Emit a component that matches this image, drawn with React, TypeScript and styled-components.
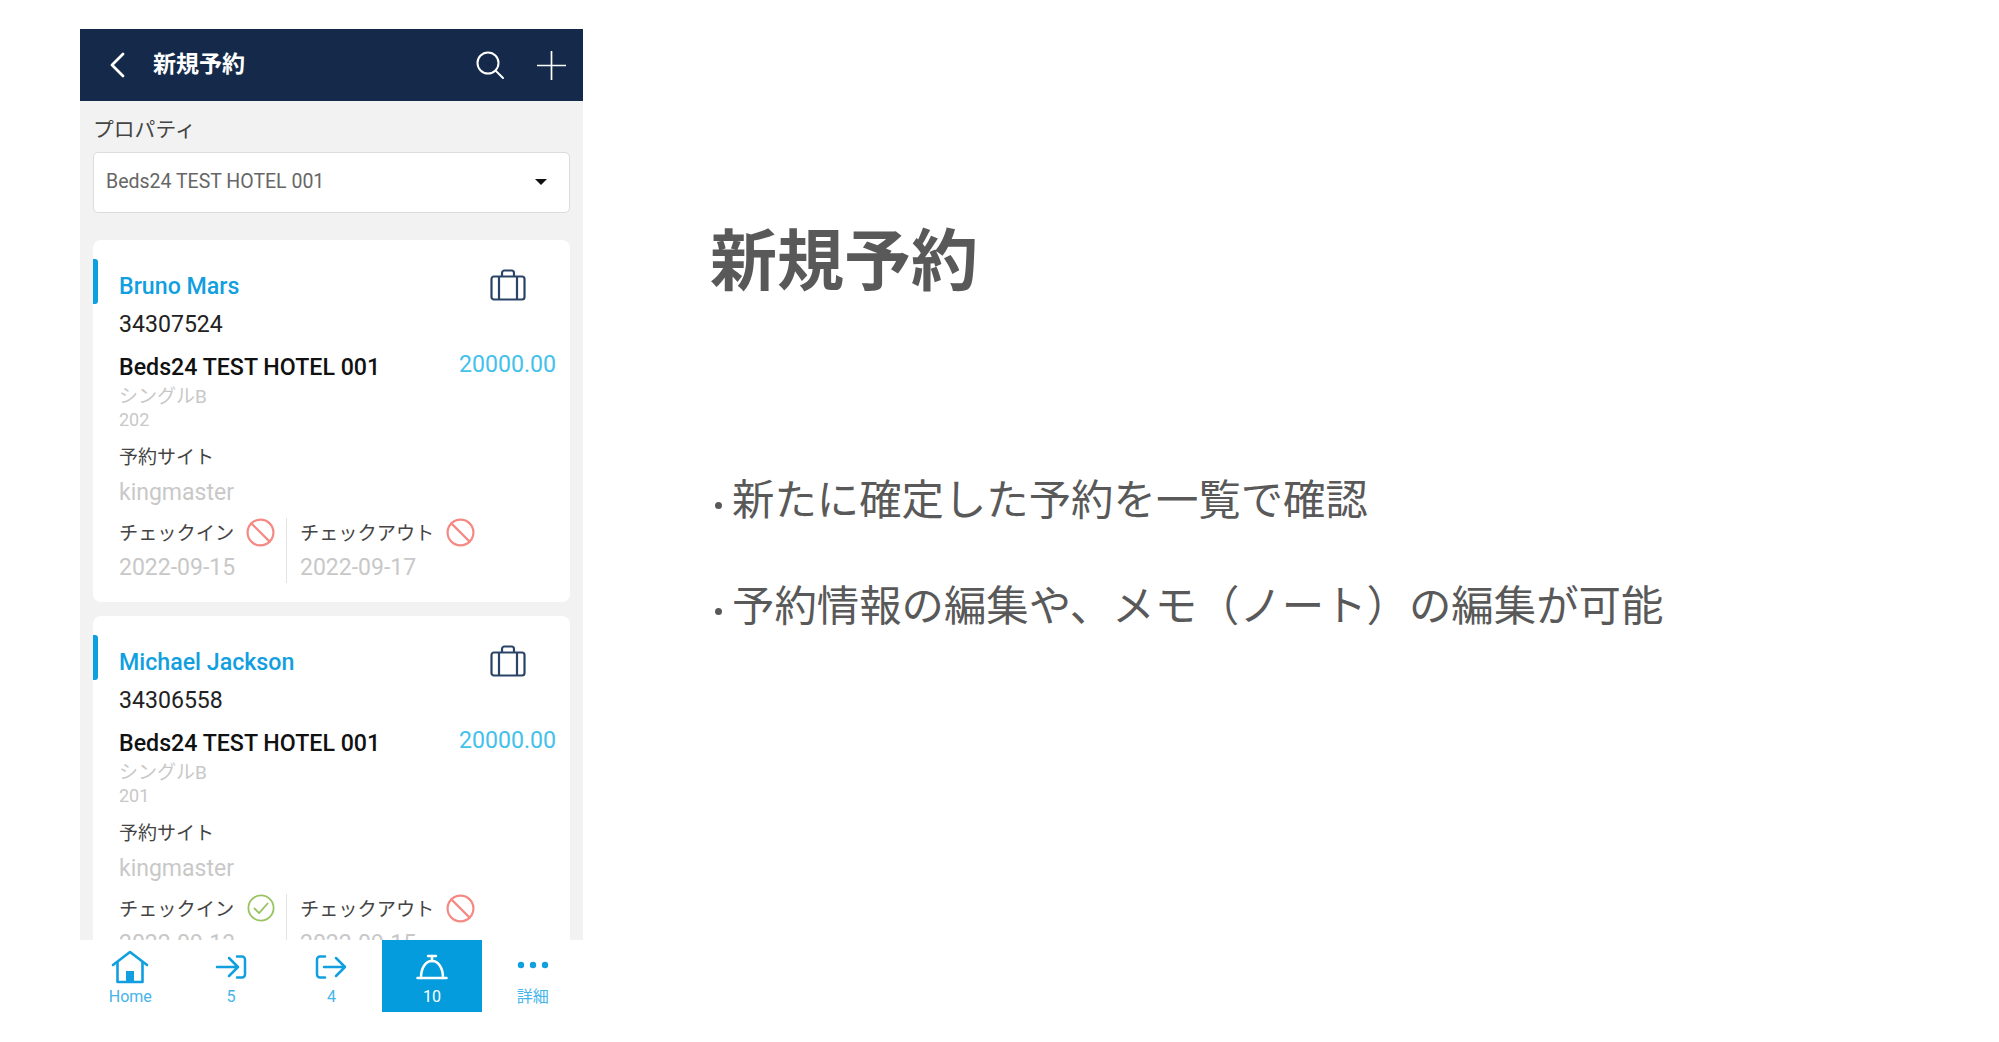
import React from "react";
import styled, { createGlobalStyle } from "styled-components";
import { Ban } from "lucide-react";

const Global = createGlobalStyle`
  html, body { margin: 0; padding: 0; background: #fff; }
  body { font-family: Roboto, "Noto Sans CJK JP", sans-serif; overflow: hidden; }
  * { box-sizing: border-box; }
`;

const Page = styled.div`
  display: flex;
  width: 1999px;
  height: 1042px;
  padding: 29px 0 30px 80px;
`;

const Phone = styled.div`
  width: 503px;
  height: 983px;
  display: flex;
  flex-direction: column;
  background: #f2f2f2;
`;

const Header = styled.header`
  height: 72px;
  flex: none;
  display: flex;
  align-items: center;
  background: #152a4a;
  color: #fff;
  padding: 0 17px 0 29px;
`;

const HeaderTitle = styled.h1`
  flex: 1;
  margin: 0 0 0 28px;
  font-size: 23px;
  line-height: 30px;
  font-weight: 700;
`;

const HeaderAction = styled.span<{ $gap: number }>`
  display: flex;
  margin-left: ${(p) => p.$gap}px;
`;

const Content = styled.div`
  flex: 1;
  min-height: 0;
  overflow: hidden;
  padding: 0 13px;
`;

const FieldLabel = styled.div`
  margin-top: 15px;
  font-size: 20.8px;
  line-height: 28px;
  color: #444;
`;

const Select = styled.div`
  height: 61px;
  margin-top: 8px;
  display: flex;
  align-items: center;
  justify-content: space-between;
  padding: 0 22px 2px 12px;
  background: #fff;
  border: 1px solid #dcdcdc;
  border-radius: 5px;
  font-size: 19.5px;
  color: #666;
`;

const Caret = styled.span`
  width: 0;
  height: 0;
  border-left: 6.5px solid transparent;
  border-right: 6.5px solid transparent;
  border-top: 6.5px solid #111;
`;

const Card = styled.article`
  position: relative;
  height: 362px;
  margin-top: 27px;
  padding: 29px 14px 22px 26px;
  background: #fff;
  border-radius: 8px;
  & + & { margin-top: 14px; }
  &::before {
    content: "";
    position: absolute;
    left: 0;
    top: 19px;
    width: 5px;
    height: 45px;
    background: #0e9fe0;
    border-radius: 0 3px 3px 0;
  }
`;

const NameRow = styled.div`
  display: flex;
  justify-content: space-between;
  align-items: center;
  height: 34px;
  padding-right: 30px;
`;

const Name = styled.div`
  font-size: 23.2px;
  font-weight: 500;
  color: #129fdf;
`;

const BriefcaseSlot = styled.span`
  display: flex;
  margin-top: -2px;
`;

const BookingId = styled.div`
  margin-top: 5px;
  font-size: 23.1px;
  line-height: 34px;
  color: #222;
`;

const HotelRow = styled.div`
  margin-top: 10px;
  display: flex;
  justify-content: space-between;
`;

const Hotel = styled.div`
  font-size: 23.2px;
  line-height: 30px;
  font-weight: 500;
  color: #111;
`;

const Price = styled.div`
  margin-top: 1px;
  font-size: 23.1px;
  line-height: 24px;
  color: #42c1ec;
`;

const RoomType = styled.div`
  margin-top: 3px;
  font-size: 19px;
  line-height: 24px;
  color: #c8c8c8;
`;

const RoomNo = styled.div`
  margin-top: -1px;
  font-size: 18px;
  line-height: 24px;
  color: #c8c8c8;
`;

const SiteLabel = styled.div`
  margin-top: 13px;
  font-size: 19px;
  line-height: 26px;
  color: #444;
`;

const SiteValue = styled.div`
  margin-top: 7px;
  font-size: 23px;
  line-height: 30px;
  color: #c8c8c8;
`;

const Stays = styled.div`
  display: grid;
  grid-template-columns: 167px 1fr;
  margin-top: 10px;
`;

const Stay = styled.div<{ $second?: boolean }>`
  ${(p) => p.$second && "border-left: 1px solid #e4e4e4; padding-left: 13px;"}
`;

const StayHead = styled.div`
  display: flex;
  align-items: center;
  gap: 11px;
  height: 28px;
  font-size: 19.2px;
  color: #444;
`;

const StatusSlot = styled.span`
  display: flex;
  width: 31px;
  justify-content: center;
`;

const StayDate = styled.div`
  margin-top: 7px;
  font-size: 23px;
  line-height: 30px;
  color: #c8c8c8;
`;

const Nav = styled.nav`
  height: 72px;
  flex: none;
  display: grid;
  grid-template-columns: repeat(5, 1fr);
  background: #fff;
`;

const Tab = styled.div<{ $active?: boolean }>`
  display: flex;
  flex-direction: column;
  align-items: center;
  padding-top: 9px;
  color: ${(p) => (p.$active ? "#fff" : "#129fdf")};
  background: ${(p) => (p.$active ? "#049cdd" : "#fff")};
`;

const TabIcon = styled.span<{ $raised?: boolean }>`
  height: 36px;
  display: flex;
  align-items: center;
  padding-bottom: ${(p) => (p.$raised ? "4px" : "0")};
`;

const TabLabel = styled.span<{ $active?: boolean }>`
  margin-top: 2px;
  font-size: 16px;
  line-height: 20px;
  color: ${(p) => (p.$active ? "#fff" : "#45b5ea")};
`;

const Aside = styled.section`
  margin-left: 127px;
  color: #595959;
`;

const Title = styled.h2`
  margin: 183px 0 0;
  font-size: 67px;
  line-height: 100px;
  font-weight: 700;
`;

const Points = styled.ul`
  list-style: none;
  margin: 158px 0 0;
  padding: 0;
`;

const Point = styled.li`
  display: flex;
  align-items: center;
  font-size: 42.4px;
  line-height: 62px;
  white-space: nowrap;
  & + & { margin-top: 44px; }
  &::before {
    content: "";
    width: 7px;
    height: 7px;
    border-radius: 50%;
    background: #595959;
    margin: 8px 10px 0 5px;
  }
`;

const Back = () => (
  <svg width="16" height="26" viewBox="0 0 16 26" fill="none" stroke="currentColor" strokeWidth="2.8" strokeLinecap="round" strokeLinejoin="round">
    <path d="M14 2 3 13l11 11" />
  </svg>
);

const SearchIcon = () => (
  <svg width="28" height="28" viewBox="0 0 28 28" fill="none" stroke="currentColor" strokeWidth="2" strokeLinecap="round">
    <circle cx="12" cy="12" r="10.5" />
    <path d="M19.6 19.6 27 27" />
  </svg>
);

const PlusIcon = () => (
  <svg width="29" height="29" viewBox="0 0 29 29" fill="none" stroke="currentColor" strokeWidth="1.7">
    <path d="M14.5 0v29M0 14.5h29" />
  </svg>
);

const Briefcase = () => (
  <svg width="36" height="32" viewBox="0 0 36 32" fill="none" stroke="#2a4468" strokeWidth="2.2" strokeLinejoin="round">
    <rect x="1.5" y="7.5" width="33" height="23" rx="2.5" />
    <path d="M9 8v22M27 8v22M12 7.5V4a2.5 2.5 0 0 1 2.5-2.5h7A2.5 2.5 0 0 1 24 4v3.5" />
  </svg>
);

const HomeIcon = () => (
  <svg width="38" height="34" viewBox="0 0 38 34" fill="none" stroke="currentColor" strokeWidth="2.6" strokeLinejoin="round" strokeLinecap="round">
    <path d="M2 15 19 2l17 13" />
    <path d="M6.5 13v19h25V13" />
    <rect x="15" y="21" width="8" height="11" fill="currentColor" stroke="none" />
  </svg>
);

const ArriveIcon = () => (
  <svg width="32" height="24" viewBox="0 0 32 24" fill="none" stroke="currentColor" strokeWidth="2.5" strokeLinecap="round" strokeLinejoin="round">
    <path d="M2 12h21M14 3l9 9-9 9" />
    <path d="M22 1.5h5a3 3 0 0 1 3 3v15a3 3 0 0 1-3 3h-5" />
  </svg>
);

const DepartIcon = () => (
  <svg width="32" height="24" viewBox="0 0 32 24" fill="none" stroke="currentColor" strokeWidth="2.5" strokeLinecap="round" strokeLinejoin="round">
    <path d="M10 1.5H5a3 3 0 0 0-3 3v15a3 3 0 0 0 3 3h5" />
    <path d="M9 12h21M21 3l9 9-9 9" />
  </svg>
);

const BellIcon = () => (
  <svg width="32" height="26" viewBox="0 0 32 26" fill="none" stroke="currentColor" strokeWidth="2.5" strokeLinecap="round">
    <path d="M1.5 24h29" />
    <path d="M5 24C5 14 9.5 7 16 7s11 7 11 17" />
    <path d="M12 2h8M16 2v5" />
  </svg>
);

const DotsIcon = () => (
  <svg width="32" height="8" viewBox="0 0 32 8" fill="currentColor">
    <circle cx="4" cy="4" r="3.2" />
    <circle cx="16" cy="4" r="3.2" />
    <circle cx="28" cy="4" r="3.2" />
  </svg>
);

const OkIcon = () => (
  <svg width="28" height="28" viewBox="0 0 28 28" fill="none" stroke="#98c35f" strokeWidth="1.8" strokeLinecap="round" strokeLinejoin="round">
    <circle cx="14" cy="14" r="12.6" />
    <path d="M7.5 14.5l4.6 4.6L20.5 9.5" />
  </svg>
);

const Status = ({ ok }: { ok?: boolean }) => (
  <StatusSlot>
    {ok ? <OkIcon /> : <Ban size={31} color="#f58a85" strokeWidth={1.7} />}
  </StatusSlot>
);

type Booking = {
  name: string;
  id: string;
  room: string;
  checkIn: string;
  checkOut: string;
  arrived?: boolean;
};

const bookings: Booking[] = [
  { name: "Bruno Mars", id: "34307524", room: "202", checkIn: "2022-09-15", checkOut: "2022-09-17" },
  { name: "Michael Jackson", id: "34306558", room: "201", checkIn: "2022-09-13", checkOut: "2022-09-15", arrived: true },
];

export default function App() {
  return (
    <>
      <Global />
      <Page>
        <Phone>
          <Header>
            <Back />
            <HeaderTitle>新規予約</HeaderTitle>
            <HeaderAction $gap={0}>
              <SearchIcon />
            </HeaderAction>
            <HeaderAction $gap={33}>
              <PlusIcon />
            </HeaderAction>
          </Header>
          <Content>
            <FieldLabel>プロパティ</FieldLabel>
            <Select>
              Beds24 TEST HOTEL 001
              <Caret />
            </Select>
            {bookings.map((b) => (
              <Card key={b.id}>
                <NameRow>
                  <Name>{b.name}</Name>
                  <BriefcaseSlot>
                    <Briefcase />
                  </BriefcaseSlot>
                </NameRow>
                <BookingId>{b.id}</BookingId>
                <HotelRow>
                  <Hotel>Beds24 TEST HOTEL 001</Hotel>
                  <Price>20000.00</Price>
                </HotelRow>
                <RoomType>シングルB</RoomType>
                <RoomNo>{b.room}</RoomNo>
                <SiteLabel>予約サイト</SiteLabel>
                <SiteValue>kingmaster</SiteValue>
                <Stays>
                  <Stay>
                    <StayHead>
                      チェックイン
                      <Status ok={b.arrived} />
                    </StayHead>
                    <StayDate>{b.checkIn}</StayDate>
                  </Stay>
                  <Stay $second>
                    <StayHead>
                      チェックアウト
                      <Status />
                    </StayHead>
                    <StayDate>{b.checkOut}</StayDate>
                  </Stay>
                </Stays>
              </Card>
            ))}
          </Content>
          <Nav>
            <Tab>
              <TabIcon><HomeIcon /></TabIcon>
              <TabLabel>Home</TabLabel>
            </Tab>
            <Tab>
              <TabIcon><ArriveIcon /></TabIcon>
              <TabLabel>5</TabLabel>
            </Tab>
            <Tab>
              <TabIcon><DepartIcon /></TabIcon>
              <TabLabel>4</TabLabel>
            </Tab>
            <Tab $active>
              <TabIcon><BellIcon /></TabIcon>
              <TabLabel $active>10</TabLabel>
            </Tab>
            <Tab>
              <TabIcon $raised><DotsIcon /></TabIcon>
              <TabLabel>詳細</TabLabel>
            </Tab>
          </Nav>
        </Phone>
        <Aside>
          <Title>新規予約</Title>
          <Points>
            <Point>新たに確定した予約を一覧で確認</Point>
            <Point>予約情報の編集や、メモ（ノート）の編集が可能</Point>
          </Points>
        </Aside>
      </Page>
    </>
  );
}
